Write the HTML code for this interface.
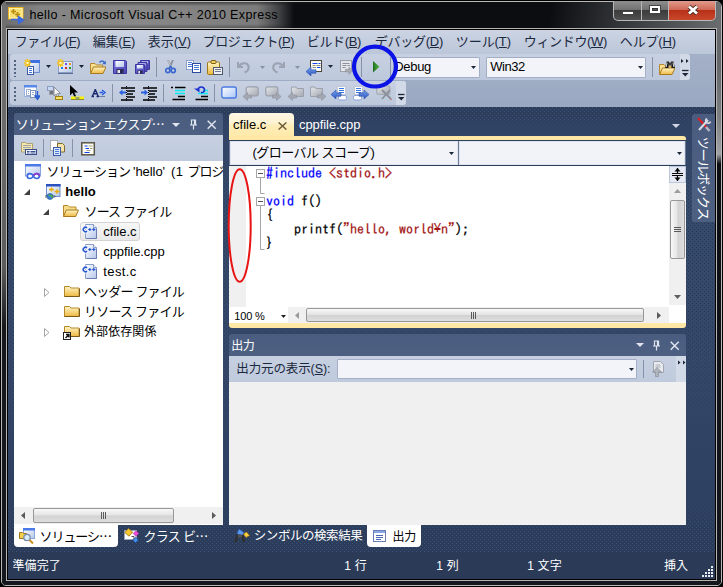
<!DOCTYPE html>
<html lang="ja"><head><meta charset="utf-8"><title>hello - Microsoft Visual C++ 2010 Express</title>
<style>
html,body{margin:0;padding:0}
body{width:723px;height:587px;overflow:hidden;position:relative;background:#000;font-family:"Liberation Sans","Noto Sans CJK JP",sans-serif;font-size:12px}
div,span.t,svg{position:absolute;box-sizing:border-box}
span.t{white-space:nowrap;display:block}
.mono{font-family:"IPAGothic","Liberation Mono","Noto Sans CJK JP",monospace;-webkit-text-stroke:0.25px}
.j{font-family:"Noto Sans CJK JP",sans-serif}
u{text-decoration:underline;text-underline-offset:1px}
</style></head>
<body>

<svg width="0" height="0" style="left:0;top:0"><defs>
<linearGradient id="gY" x1="0" y1="0" x2="0" y2="1"><stop offset="0" stop-color="#fff6c8"/><stop offset="1" stop-color="#eeb840"/></linearGradient>
<linearGradient id="gW" x1="0" y1="0" x2="1" y2="1"><stop offset="0" stop-color="#ffffff"/><stop offset="1" stop-color="#b4c6ea"/></linearGradient>
<linearGradient id="gB" x1="0" y1="0" x2="0" y2="1"><stop offset="0" stop-color="#7aa2ee"/><stop offset="1" stop-color="#2a56c0"/></linearGradient>
<linearGradient id="gG" x1="0" y1="0" x2="1" y2="1"><stop offset="0" stop-color="#e4e6ea"/><stop offset="1" stop-color="#a4a8b0"/></linearGradient>
<linearGradient id="gP" x1="0" y1="0" x2="1" y2="1"><stop offset="0" stop-color="#7a76e0"/><stop offset="1" stop-color="#4a44b0"/></linearGradient>
<linearGradient id="gGr" x1="0" y1="0" x2="1" y2="0"><stop offset="0" stop-color="#1e6e1e"/><stop offset="1" stop-color="#58b848"/></linearGradient>
<linearGradient id="gBk" x1="0" y1="0" x2="1" y2="1"><stop offset="0" stop-color="#ffffff"/><stop offset="1" stop-color="#a8c4f8"/></linearGradient>
</defs></svg>

<div style="left:0px;top:0px;width:723px;height:587px;background:#000;border-radius:7px 7px 6px 6px;"></div>
<div style="left:1px;top:1px;width:721px;height:585px;border:1px solid #b9b9b9;border-radius:6px 6px 5px 5px;background:#14181e;"></div>
<div style="left:2px;top:2px;width:719px;height:26px;background:linear-gradient(90deg,#6c6c6c 0px,#848484 40px,#888888 140px,#7c7c7c 255px,#444547 276px,#0b0d10 292px,#0b0d10 100%);border-radius:5px 5px 0 0;"></div>
<div style="left:2px;top:2px;width:318px;height:4px;background:linear-gradient(180deg,rgba(20,20,22,.55),rgba(20,20,22,0));border-radius:5px 0 0 0;"></div>
<div style="left:2px;top:24px;width:318px;height:4px;background:linear-gradient(0deg,rgba(20,20,22,.35),rgba(20,20,22,0));"></div>
<div style="left:2px;top:2px;width:719px;height:26px;background:linear-gradient(97deg,rgba(108,112,114,0) 545px,rgba(108,112,114,.55) 640px,rgba(108,112,114,1) 722px);border-radius:5px 5px 0 0;"></div>
<div style="left:2px;top:2px;width:4px;height:583px;background:linear-gradient(180deg,#707070 0px,#6a6a6a 150px,#5c5c5c 265px,#16181c 325px,#14181e 100%);border-radius:5px 0 0 5px;"></div>
<div style="left:717px;top:2px;width:4px;height:583px;background:linear-gradient(180deg,#6a6e70 0px,#64686a 60px,#7c7e80 115px,#a0a2a4 152px,#0c0e12 162px,#14181e 100%);border-radius:0 5px 5px 0;"></div>
<div style="left:6px;top:28px;width:711px;height:553px;border:1px solid #b4b4b4;background:#000;"></div>
<div style="left:7px;top:29px;width:709px;height:551px;background:#000;"></div>
<div style="left:8px;top:30px;width:707px;height:549px;background:#293955;"></div>
<svg style="left:8px;top:7px;" width="17" height="17" viewBox="0 0 17 17"><rect x=".5" y=".5" width="14.500" height="11.500" fill="#f8e070" stroke="#e8b020"/><rect x="1.500" y="1.500" width="12.500" height="9.500" fill="none" stroke="#fff4b0"/><path d="M3 4.500h5M5.500 2v5M7 7.500h5M9.500 5v5" stroke="#b88a10" stroke-width="1.700"/><path d="M3 12.500h9M10.500 9.500l5 3.500-5 3.500z" stroke="#3a6ae0" stroke-width="1.400" fill="#3a6ae0"/></svg>
<span id="t1" class="t " style="left:29.4px;top:6.699999999999999px;font-size:12.5px;line-height:16px;color:#000;letter-spacing:0.392px;">hello - Microsoft Visual C++ 2010 Express</span>
<div style="left:613px;top:1px;width:103px;height:20px;background:#b8b8b8;border-radius:0 0 5px 5px;"></div>
<div style="left:614px;top:1px;width:27px;height:19px;background:linear-gradient(#8e8e8e 0,#727272 45%,#3c3c3c 50%,#505050 100%);border-radius:0 0 0 4px;"></div>
<div style="left:642px;top:1px;width:26px;height:19px;background:linear-gradient(#8e8e8e 0,#727272 45%,#3c3c3c 50%,#505050 100%);"></div>
<div style="left:669px;top:1px;width:46px;height:19px;background:linear-gradient(#e09a8c 0,#d06a58 45%,#b83018 50%,#c8482c 100%);border-radius:0 0 4px 0;"></div>
<div style="left:622px;top:11px;width:12px;height:4px;background:#fff;border:1px solid #444;"></div>
<div style="left:649px;top:5px;width:12px;height:9px;background:#fff;border:1px solid #444;"></div>
<div style="left:652px;top:8px;width:6px;height:3px;background:#555;border:1px solid #333;"></div>
<svg style="left:686px;top:4px" width="14" height="12" viewBox="0 0 14 12"><path d="M3 2.500l8 7M11 2.500l-8 7" stroke="#4a2a24" stroke-width="4.400"/><path d="M3 2.500l8 7M11 2.500l-8 7" stroke="#fff" stroke-width="2.800"/></svg>
<div style="left:8px;top:30px;width:707px;height:23px;background:linear-gradient(#ccd4e3,#bcc7d9);"></div>
<span id="t2" class="t " style="left:14.8px;top:33.9px;font-size:13px;line-height:16px;color:#1b293e;letter-spacing:-0.492px;">ファイル(<u>F</u>)</span>
<span id="t3" class="t " style="left:92.8px;top:33.9px;font-size:13px;line-height:16px;color:#1b293e;letter-spacing:-0.232px;">編集(<u>E</u>)</span>
<span id="t4" class="t " style="left:147.8px;top:33.9px;font-size:13px;line-height:16px;color:#1b293e;letter-spacing:-0.032px;">表示(<u>V</u>)</span>
<span id="t5" class="t " style="left:202.8px;top:33.9px;font-size:13px;line-height:16px;color:#1b293e;letter-spacing:-0.462px;">プロジェクト(<u>P</u>)</span>
<span id="t6" class="t " style="left:306.8px;top:33.9px;font-size:13px;line-height:16px;color:#1b293e;letter-spacing:-0.360px;">ビルド(<u>B</u>)</span>
<span id="t7" class="t " style="left:374.8px;top:33.9px;font-size:13px;line-height:16px;color:#1b293e;letter-spacing:-0.268px;">デバッグ(<u>D</u>)</span>
<span id="t8" class="t " style="left:455.8px;top:33.9px;font-size:13px;line-height:16px;color:#1b293e;letter-spacing:-0.073px;">ツール(<u>T</u>)</span>
<span id="t9" class="t " style="left:523.8px;top:33.9px;font-size:13px;line-height:16px;color:#1b293e;letter-spacing:-0.346px;">ウィンドウ(<u>W</u>)</span>
<span id="t10" class="t " style="left:619.8px;top:33.9px;font-size:13px;line-height:16px;color:#1b293e;letter-spacing:-0.146px;">ヘルプ(<u>H</u>)</span>
<div style="left:8px;top:53px;width:707px;height:54px;background:linear-gradient(#a3b0c8,#9aa8c1);"></div>
<div style="left:8px;top:53px;width:707px;height:1px;background:#bcc7d9;"></div>
<div style="left:10px;top:54px;width:680px;height:26px;background:linear-gradient(#c8d1e2,#bdc8dc);border-radius:3px;"></div>
<div style="left:10px;top:81px;width:396px;height:24px;background:linear-gradient(#c8d1e2,#bdc8dc);border-radius:3px;"></div>
<div style="left:680px;top:54px;width:10px;height:26px;background:#d3dae7;border-radius:0 3px 3px 0;"></div>
<div style="left:396px;top:81px;width:10px;height:24px;background:#d3dae7;border-radius:0 3px 3px 0;"></div>
<div style="left:14px;top:60px;width:2px;height:2px;background:#53637f;"></div>
<div style="left:14px;top:64px;width:2px;height:2px;background:#53637f;"></div>
<div style="left:14px;top:68px;width:2px;height:2px;background:#53637f;"></div>
<div style="left:14px;top:72px;width:2px;height:2px;background:#53637f;"></div>
<div style="left:14px;top:76px;width:2px;height:1px;background:#53637f;"></div>
<div style="left:14px;top:87px;width:2px;height:2px;background:#53637f;"></div>
<div style="left:14px;top:91px;width:2px;height:2px;background:#53637f;"></div>
<div style="left:14px;top:95px;width:2px;height:2px;background:#53637f;"></div>
<div style="left:14px;top:99px;width:2px;height:2px;background:#53637f;"></div>
<svg style="left:24px;top:59px;" width="16" height="16" viewBox="0 0 16 16"><rect x="5.5" y="1.5" width="10" height="12" fill="url(#gW)" stroke="#6f8fd0"/><rect x="5" y="1" width="11" height="3" fill="#3f6fe0"/><rect x="3.5" y="7.5" width="6" height="8" fill="#fff" stroke="#3c5aa8"/><path d="M5 9.5H8" stroke="#4070d8"/><path d="M5 11.5H8" stroke="#4070d8"/><path d="M5 13.5H8" stroke="#4070d8"/><path d="M3.500 0v8M0 4h7M1 1l5 6M6 1L1 7" stroke="#f6c41c" stroke-width="1.500"/><rect x="2.500" y="3" width="2" height="2" fill="#fffad0"/></svg>
<svg style="left:45.5px;top:65px" width="5" height="3" viewBox="0 0 5 3"><path d="M0 0h5l-2.5 3z" fill="#1b2538"/></svg>
<svg style="left:57px;top:59px;" width="16" height="16" viewBox="0 0 16 16"><rect x="1.5" y="2.500" width="14" height="11" fill="url(#gW)" stroke="#8a9cc0"/><path d="M1 14.500h15.500V3" fill="none" stroke="#5a6c98"/><rect x="8" y="4" width="2" height="2" fill="#7050d0"/><rect x="12" y="4" width="2" height="2" fill="#f09020"/><rect x="4" y="8" width="2" height="2" fill="#2080e8"/><rect x="8" y="8" width="2" height="2" fill="#e03020"/><rect x="12" y="8" width="2" height="2" fill="#30a030"/><path d="M3.500 0v8M0 4h7M1 1l5 6M6 1L1 7" stroke="#f6c41c" stroke-width="1.500"/><rect x="2.500" y="3" width="2" height="2" fill="#fffad0"/></svg>
<svg style="left:78.5px;top:65px" width="5" height="3" viewBox="0 0 5 3"><path d="M0 0h5l-2.5 3z" fill="#1b2538"/></svg>
<svg style="left:90px;top:59px;" width="16" height="16" viewBox="0 0 16 16"><g transform="translate(0,1)"><path d="M.5 13.5V3.500h4.500l1.500 1.500h6v2" fill="#f8e090" stroke="#b8892c"/><path d="M.5 13.500l3-6.500h12.500l-3 6.500z" fill="url(#gY)" stroke="#a87a20"/></g><path d="M9.500 3.500c1.500-2 4-2 5 .5" fill="none" stroke="#3a6ac8" stroke-width="1.400"/><path d="M15.800 1.500v3.800h-3.600z" fill="#3a6ac8"/></svg>
<svg style="left:113px;top:60px;" width="16" height="16" viewBox="0 0 16 16"><path d="M.5 .5h12l1 1v12h-13z" fill="url(#gP)" stroke="#3c38a0"/><rect x="2.500" y="1" width="8.500" height="6" fill="url(#gW)"/><rect x="3.500" y="9" width="7" height="4.500" fill="#2a2a50"/><rect x="4.500" y="10" width="2.500" height="3" fill="#e8e8f0"/></svg>
<svg style="left:135px;top:60px;" width="16" height="16" viewBox="0 0 16 16"><path d="M5.500 .5h9v9h-9z" fill="url(#gP)" stroke="#3c38a0"/><rect x="7" y="1.500" width="6" height="2" fill="#e8ecff"/><path d="M3 2.500h9v9h-9z" fill="url(#gP)" stroke="#3c38a0"/><rect x="4.500" y="3.500" width="6" height="2" fill="#e8ecff"/><path d="M.5 4.500h9v9h-9z" fill="url(#gP)" stroke="#3c38a0"/><rect x="2" y="5" width="6" height="3.500" fill="url(#gW)"/><rect x="2.500" y="10.500" width="5" height="3" fill="#2a2a50"/><rect x="3.300" y="11" width="1.700" height="2.500" fill="#e8e8f0"/></svg>
<div style="left:156px;top:57px;width:1px;height:20px;background:#8592aa;"></div>
<svg style="left:165px;top:60px;" width="16" height="16" viewBox="0 0 16 16"><path d="M3 0l3.500 8M8 0l-3.500 8" stroke="#8a8e98" stroke-width="1.800" fill="none"/><path d="M3.200 .5l2.600 6" stroke="#e8eaee" stroke-width=".7"/><circle cx="2.800" cy="10.500" r="2.100" fill="none" stroke="#3a68d0" stroke-width="1.700"/><circle cx="8.200" cy="10.500" r="2.100" fill="none" stroke="#3a68d0" stroke-width="1.700"/><path d="M4.200 8.500L5.500 6.500 6.800 8.500" stroke="#3a68d0" stroke-width="1.500" fill="none"/></svg>
<svg style="left:185.5px;top:60px;" width="16" height="16" viewBox="0 0 16 16"><rect x="0.5" y="0.5" width="7" height="9" fill="#fff" stroke="#8aa0d0"/><path d="M2 2.5H6" stroke="#4a78d8"/><path d="M2 4.5H6" stroke="#4a78d8"/><path d="M2 6.5H6" stroke="#4a78d8"/><rect x="6.5" y="3.5" width="8" height="9" fill="#fff" stroke="#2a4aa0"/><path d="M8 5.5H13" stroke="#4a78d8"/><path d="M8 7.5H13" stroke="#4a78d8"/><path d="M8 9.5H13" stroke="#4a78d8"/></svg>
<svg style="left:207px;top:59.5px;" width="16" height="16" viewBox="0 0 16 16"><rect x=".5" y="2" width="12" height="12.500" rx="1" fill="url(#gY)" stroke="#a07818"/><rect x="4" y=".5" width="5" height="3" rx="1" fill="#f0d060" stroke="#806010"/><rect x="6.5" y="7.5" width="9" height="7" fill="#eef0f4" stroke="#50586c"/><path d="M8 9.5H14" stroke="#70788c"/><path d="M8 11.5H14" stroke="#70788c"/></svg>
<div style="left:229px;top:57px;width:1px;height:20px;background:#8592aa;"></div>
<svg style="left:237px;top:60px;" width="16" height="16" viewBox="0 0 16 16"><path d="M1 2v5h5" fill="none" stroke="#9ca3b2" stroke-width="2"/><path d="M2 6.500c2-4 8-4.500 9.500-.5 1 3-1 5.500-4 6.500" fill="none" stroke="#9ca3b2" stroke-width="2.200"/></svg>
<svg style="left:259.5px;top:66px" width="5" height="3" viewBox="0 0 5 3"><path d="M0 0h5l-2.5 3z" fill="#8a919f"/></svg>
<svg style="left:272px;top:60px;" width="16" height="16" viewBox="0 0 16 16"><g transform="translate(13,0) scale(-1,1)"><path d="M1 2v5h5" fill="none" stroke="#9ca3b2" stroke-width="2"/><path d="M2 6.500c2-4 8-4.500 9.500-.5 1 3-1 5.500-4 6.500" fill="none" stroke="#9ca3b2" stroke-width="2.200"/></g></svg>
<svg style="left:294.5px;top:66px" width="5" height="3" viewBox="0 0 5 3"><path d="M0 0h5l-2.5 3z" fill="#8a919f"/></svg>
<svg style="left:306px;top:59.5px;" width="16" height="16" viewBox="0 0 16 16"><rect x="4.500" y=".5" width="11" height="11" fill="#fffef4" stroke="#4a463c"/><path d="M6.500 3.500h5M12.500 3.500h2M11 7.500h3.500" stroke="#1040f0"/><path d="M6.500 5.500h3M10.500 5.500h4M6.500 7.500h3.500" stroke="#8a8a80"/><path d="M0 11.500l5-4.500v2.800h5v3.400h-5v2.800z" fill="url(#gB)" stroke="#2a50b0" stroke-width=".6"/></svg>
<svg style="left:327.5px;top:65px" width="5" height="3" viewBox="0 0 5 3"><path d="M0 0h5l-2.5 3z" fill="#1b2538"/></svg>
<svg style="left:339.5px;top:60px;" width="16" height="16" viewBox="0 0 16 16"><rect x=".5" y=".5" width="11" height="11" fill="#e4e6ea" stroke="#9aa0ac"/><path d="M2.500 3.500h7M2.500 5.500h4M7.500 5.500h2.500M2.500 7.500h3" stroke="#8a909c"/><path d="M13 10.500l-4-3.500v2.300h-3.500v2.600h3.500v2.300z" fill="#a8acb4" stroke="#8a8e98" stroke-width=".6"/></svg>
<div style="left:361px;top:57px;width:1px;height:20px;background:#8592aa;"></div>
<svg style="left:373px;top:60.5px;" width="8" height="12" viewBox="0 0 8 12"><path d="M0 0l6.500 5.800-6.500 5.800z" fill="url(#gGr)"/></svg>
<div style="left:390px;top:57px;width:1px;height:20px;background:#8592aa;"></div>
<div style="left:393px;top:57px;width:87px;height:21px;background:#f2f4f9;border:1px solid #a3afc6;border-radius:1px;"></div>
<div style="left:486px;top:57px;width:160px;height:21px;background:#f2f4f9;border:1px solid #a3afc6;border-radius:1px;"></div>
<span id="t11" class="t " style="left:394.3px;top:58.5px;font-size:13px;line-height:16px;color:#000;letter-spacing:-0.322px;">Debug</span>
<span id="t12" class="t " style="left:490.3px;top:58.5px;font-size:13px;line-height:16px;color:#000;letter-spacing:-0.452px;">Win32</span>
<svg style="left:471px;top:66px" width="5" height="3" viewBox="0 0 5 3"><path d="M0 0h5l-2.5 3z" fill="#1b2538"/></svg>
<svg style="left:637.5px;top:66px" width="5" height="3" viewBox="0 0 5 3"><path d="M0 0h5l-2.5 3z" fill="#1b2538"/></svg>
<div style="left:652px;top:57px;width:1px;height:20px;background:#8592aa;"></div>
<svg style="left:659px;top:59.5px;" width="16" height="16" viewBox="0 0 16 16"><g transform="translate(0,1)"><path d="M.5 13.5V3.500h4.500l1.500 1.500h6v2" fill="#f8e090" stroke="#b8892c"/><path d="M.5 13.500l3-6.500h12.500l-3 6.500z" fill="url(#gY)" stroke="#a87a20"/></g><path d="M7.600 1.500l-1.600 6.500h3.400l.7-6.500zM12 1.500l.7 6.500h3.300l-1.500-6.500z" fill="#1c1c1c"/><path d="M9.800 2.500h2.500v2.800h-2.500z" fill="#3a3a3a"/><path d="M8 2.500l-.9 4.500M14 2.500l.9 4.500" stroke="#f0f0f0" stroke-width=".9"/></svg>
<svg style="left:681px;top:58px" width="8" height="20" viewBox="0 0 8 20"><path d="M0 1l2.500 2-2.500 2zM5 1l2.500 2-2.500 2z" fill="#1b2538"/><path d="M1 12.500h6.500" stroke="#1b2538" stroke-width="1.300"/><path d="M1 15h6.500l-3.250 3.500z" fill="#1b2538"/></svg>
<svg style="left:24px;top:85px;" width="16" height="16" viewBox="0 0 16 16"><rect x=".5" y=".5" width="12" height="11" fill="#fff" stroke="#9ab2e4"/><rect x="0" y="0" width="13" height="2.500" fill="#5a8ae8"/><rect x="2.5" y="4.5" width="4" height="6" fill="#fff" stroke="#9aacd0"/><path d="M4 6.5H5" stroke="#9aacd0"/><path d="M4 8.5H5" stroke="#9aacd0"/><rect x="6.5" y="5.5" width="5" height="7" fill="#fff" stroke="#7a90c4"/><path d="M8 7.5H10" stroke="#9aacd0"/><path d="M8 9.5H10" stroke="#9aacd0"/><path d="M13.500 6v6M11 11l2.500 3.500 2.500-3.500z" stroke="#2a60d0" stroke-width="1.300" fill="#2a60d0"/></svg>
<svg style="left:46.5px;top:85px;" width="16" height="16" viewBox="0 0 16 16"><rect x=".5" y="1.500" width="6" height="4" fill="#c8d8f4" stroke="#8a9cc0"/><rect x="2.500" y="5.500" width="4" height="4" fill="#70747c" stroke="#9aa0ac"/><path d="M7 2v9l2.200-2 1.500 3.200 1.300-.6-1.500-3.100h3z" fill="#f4f4f4" stroke="#7a7e88" stroke-width=".8"/><rect x="8.500" y="11.500" width="7" height="3" fill="#f8e060" stroke="#a08018"/></svg>
<svg style="left:69px;top:85px;" width="16" height="16" viewBox="0 0 16 16"><path d="M1 0v10.500l2.600-2.400 1.800 3.900 1.700-.8-1.800-3.700h3.700z" fill="#000"/><rect x="2" y="11.500" width="13" height="3" fill="#f8f208"/><path d="M2 14.500h13" stroke="#8a8a30"/><path d="M6.500 13h4" stroke="#3050d0"/></svg>
<svg style="left:90.5px;top:89px;" width="16" height="16" viewBox="0 0 16 16"><path d="M.5 7.500h2.500M5.500 7.500h2.500M1.500 7l2.800-6.500 2.800 6.500M2.800 4.800h3" fill="none" stroke="#1a2a70" stroke-width="1.400"/><path d="M8.500 3.500h3.500M11 1l3 2.500-3 2.500" fill="none" stroke="#2a60e0" stroke-width="1.500"/><path d="M8.500 7.500h1M10.500 7.500h1M12.500 7.500h1" stroke="#1a2a70"/></svg>
<div style="left:112px;top:84px;width:1px;height:18px;background:#8592aa;"></div>
<svg style="left:119px;top:85.5px;" width="16" height="16" viewBox="0 0 16 16"><path d="M7.500 0v16" stroke="#000" stroke-dasharray="1 1"/><path d="M2 2h14M8 5h8M8 8h6M8 11h8M2 14h12" stroke="#000" stroke-width="1.600"/><path d="M0 6.500l3.500-3v2h3.500v2h-3.500v2z" fill="#2a60e0"/></svg>
<svg style="left:141px;top:85.5px;" width="16" height="16" viewBox="0 0 16 16"><path d="M7.500 0v16" stroke="#000" stroke-dasharray="1 1"/><path d="M2 2h14M8 5h8M8 8h6M8 11h8M2 14h12" stroke="#000" stroke-width="1.600"/><path d="M7 6.500l-3.500-3v2h-3.500v2h3.500v2z" fill="#2a60e0"/></svg>
<div style="left:163px;top:84px;width:1px;height:18px;background:#8592aa;"></div>
<svg style="left:170.5px;top:85.5px;" width="16" height="16" viewBox="0 0 16 16"><path d="M0 1.500h2M4 1.500h10.500M7 10.500h7M1.500 13.500h12.500" stroke="#000" stroke-width="1.500"/><path d="M4 4.500h10M4 7.500h10" stroke="#10e8f0" stroke-width="1.500"/></svg>
<svg style="left:193.5px;top:85.5px;" width="16" height="16" viewBox="0 0 16 16"><path d="M7 10.500h7M1.500 13.500h12.500" stroke="#000" stroke-width="1.500"/><path d="M4 7.500h10M9 4.500h5" stroke="#10e8f0" stroke-width="1.300"/><path d="M4 3c1.500-3 6.500-2.500 6.500 1 0 2-2 2.800-3.500 2.300" fill="none" stroke="#1a30d0" stroke-width="1.600"/><path d="M0 2.500h5.500v4z" fill="#1a30d0"/></svg>
<div style="left:214px;top:84px;width:1px;height:18px;background:#8592aa;"></div>
<svg style="left:221px;top:86px;" width="16" height="16" viewBox="0 0 16 16"><rect x=".8" y="1" width="14.500" height="11" rx="2" fill="url(#gBk)" stroke="#4a7ae0" stroke-width="1.400"/></svg>
<svg style="left:243px;top:85.5px;" width="16" height="16" viewBox="0 0 16 16"><rect x="3.2" y=".8" width="12" height="9" rx="2" fill="url(#gG)" stroke="#9aa0ac" stroke-width="1.200"/><path d="M0 10.500l4.500-4v2.500h4v3h-4v2.500z" fill="#a4a8b2" stroke="#8c909a" stroke-width=".6"/></svg>
<svg style="left:265px;top:85.5px;" width="16" height="16" viewBox="0 0 16 16"><rect x="0.8" y=".8" width="12" height="9" rx="2" fill="url(#gG)" stroke="#9aa0ac" stroke-width="1.200"/><path d="M16 10.500l-4.500-4v2.500h-4v3h4v2.500z" fill="#a4a8b2" stroke="#8c909a" stroke-width=".6"/></svg>
<svg style="left:288px;top:85.5px;" width="16" height="16" viewBox="0 0 16 16"><path d="M3.5 3.500v-2.500h4.500l1 1.500h6.500v8h-12z" fill="url(#gG)" stroke="#9aa0ac"/><path d="M0 10.500l4.500-4v2.500h4v3h-4v2.500z" fill="#a4a8b2" stroke="#8c909a" stroke-width=".6"/></svg>
<svg style="left:310px;top:85.5px;" width="16" height="16" viewBox="0 0 16 16"><path d="M0.5 3.500v-2.500h4.500l1 1.500h6.500v8h-12z" fill="url(#gG)" stroke="#9aa0ac"/><path d="M16 10.500l-4.500-4v2.500h-4v3h4v2.500z" fill="#a4a8b2" stroke="#8c909a" stroke-width=".6"/></svg>
<svg style="left:331px;top:86px;" width="16" height="16" viewBox="0 0 16 16"><rect x="6.5" y="0.5" width="8" height="8" fill="#fff" stroke="#c0c8d8"/><path d="M8 2.5H13" stroke="#3a78e0"/><path d="M8 4.5H13" stroke="#3a78e0"/><path d="M8 6.5H13" stroke="#3a78e0"/><rect x="7.500" y="9.500" width="8" height="4.500" rx="1.500" fill="#fff" stroke="#8aa4d8"/><path d="M0 8.500l5-4.500v2.800h5v3.400h-5v2.800z" fill="url(#gB)" stroke="#2a50b0" stroke-width=".6"/></svg>
<svg style="left:353px;top:86px;" width="16" height="16" viewBox="0 0 16 16"><rect x="1.5" y="0.5" width="8" height="8" fill="#fff" stroke="#c0c8d8"/><path d="M3 2.5H8" stroke="#3a78e0"/><path d="M3 4.5H8" stroke="#3a78e0"/><path d="M3 6.5H8" stroke="#3a78e0"/><rect x=".5" y="9.500" width="8" height="4.500" rx="1.500" fill="#fff" stroke="#8aa4d8"/><path d="M16 8.500l-5-4.500v2.800h-5v3.400h5v2.800z" fill="url(#gB)" stroke="#2a50b0" stroke-width=".6"/></svg>
<svg style="left:375.5px;top:85px;" width="16" height="16" viewBox="0 0 16 16"><rect x=".8" y="1" width="13" height="8.500" rx="2" fill="url(#gG)" stroke="#a4a8b2" stroke-width="1.200"/><path d="M6 5l9 9M14 5l-8 9" stroke="#8c909a" stroke-width="1.800"/><rect x="14.500" y="14" width="1" height="1" fill="#e04020"/></svg>
<svg style="left:397px;top:92px" width="8" height="10" viewBox="0 0 8 10"><path d="M1 2.500h6.500" stroke="#1b2538" stroke-width="1.300"/><path d="M1 5h6.500l-3.250 3.500z" fill="#1b2538"/></svg>
<svg style="left:8px;top:107px" width="707" height="445" viewBox="0 0 707 445"><defs><linearGradient id="bgg" x1="0" y1="0" x2="0" y2="1"><stop offset="0" stop-color="#2c3c5a"/><stop offset="0.07" stop-color="#324568"/><stop offset="0.2" stop-color="#364a6b"/><stop offset="0.6" stop-color="#34476a"/><stop offset="0.84" stop-color="#2f4162"/><stop offset="1" stop-color="#2b3c5a"/></linearGradient><linearGradient id="dgg" x1="0" y1="0" x2="0" y2="1"><stop offset="0" stop-color="#3d5378"/><stop offset="0.07" stop-color="#324568"/><stop offset="0.2" stop-color="#293853"/><stop offset="0.6" stop-color="#2b3b58"/><stop offset="0.84" stop-color="#2f4162"/><stop offset="1" stop-color="#3d5378"/></linearGradient><pattern id="dots" width="4" height="4" patternUnits="userSpaceOnUse"><rect x="0" y="0" width="1" height="1" fill="#fff"/><rect x="2" y="2" width="1" height="1" fill="#fff"/></pattern><mask id="dm"><rect width="707" height="445" fill="url(#dots)"/></mask></defs><rect width="707" height="445" fill="url(#bgg)"/><rect width="707" height="445" fill="url(#dgg)" mask="url(#dm)"/></svg>
<div style="left:8px;top:552px;width:707px;height:27px;background:#2a3a57;"></div>
<div style="left:14px;top:113px;width:209px;height:22px;background:linear-gradient(#4a5d80,#4d6082);border-radius:3px 3px 0 0;"></div>
<span id="t13" class="t " style="left:15.8px;top:116.0px;font-size:13px;line-height:16px;color:#fff;letter-spacing:-0.830px;">ソリューション エクスプ<span class="j">…</span></span>
<svg style="left:172px;top:122.5px" width="8" height="4" viewBox="0 0 8 4"><path d="M0 0h8l-4.0 4z" fill="#dfe4ee"/></svg>
<svg style="left:190px;top:118.5px" width="7" height="11" viewBox="0 0 7 11"><path d="M1.500 5.500v-4.500h4v4.500M4.500 1v4.500M0 6h7M3.500 6v4.500" fill="none" stroke="#dfe4ee" stroke-width="1.200"/></svg>
<svg style="left:207.3px;top:119.5px" width="10" height="10" viewBox="0 0 10 10"><path d="M.7 .7l8 8M8.700 .7l-8 8" stroke="#dfe4ee" stroke-width="1.500"/></svg>
<div style="left:14px;top:135px;width:209px;height:26px;background:linear-gradient(#c6d0e1,#bfcadc);"></div>
<svg style="left:21px;top:140px;" width="16" height="16" viewBox="0 0 16 16"><path d="M.5 2.500h4l1 1h6v8.500h-11z" fill="#f4e8b0" stroke="#b0a070"/><path d="M2 5.500h8M2 7.500h8M2 9.500h4" stroke="#a0a4a8"/><rect x="4.500" y="9.500" width="11" height="5" fill="#f0f4fc" stroke="#3a4e88"/><path d="M6 11.500h2.500M9.500 11.500h5M6 13h2.500M9.500 13h5" stroke="#3a4e88"/></svg>
<div style="left:43px;top:139px;width:1px;height:18px;background:#8592aa;"></div>
<svg style="left:50px;top:140px;" width="16" height="16" viewBox="0 0 16 16"><rect x=".5" y=".5" width="7" height="10" fill="#fff" stroke="#70747c" stroke-dasharray="1 1"/><path d="M7.500 3.500h5l2 2v6.500h-7z" fill="#f4e4a8" stroke="#806c30"/><rect x="3.5" y="7.5" width="7" height="8" fill="#dce8fc" stroke="#3c5aa8"/><path d="M5 9.5H9" stroke="#4a78d8"/><path d="M5 11.5H9" stroke="#4a78d8"/><path d="M5 13.5H9" stroke="#4a78d8"/></svg>
<div style="left:72px;top:139px;width:1px;height:18px;background:#8592aa;"></div>
<svg style="left:80.5px;top:141.5px;" width="16" height="16" viewBox="0 0 16 16"><rect x=".8" y=".8" width="12.500" height="12" fill="#fffef4" stroke="#5a5648" stroke-width="1.500"/><path d="M3.500 4h3M4.500 6.500h3.500M3.500 10.500h5" stroke="#1040f0" stroke-width="1.200"/><path d="M7.500 4h4M9 6.500h2.500M5.500 8.500h4" stroke="#a0a098"/></svg>
<div style="left:14px;top:161px;width:209px;height:364px;background:#fff;"></div>
<div style="left:80px;top:222px;width:60px;height:19px;background:linear-gradient(#f7f7f7,#e9e9e9);border:1px solid #d3d3d3;border-radius:3px;"></div>
<svg style="left:25px;top:164px;" width="16" height="16" viewBox="0 0 16 16"><rect x=".5" y=".5" width="15" height="11.500" fill="url(#gW)" stroke="#8aa4dc"/><rect x="0" y="0" width="16" height="2.500" fill="#4a7ae8"/><path d="M8.300 12c-1.500-3.300-6-3.300-6 0s4.500 3.300 6 0 6-3.300 6 0-4.500 3.300-6 0z" fill="#fff" stroke="#3a6ae0" stroke-width="1.700"/><path d="M8.300 12c1.500-3.300 6-3.300 6 0" fill="none" stroke="#8a40d0" stroke-width="1.700"/></svg>
<span id="t14" class="t " style="left:46.5px;top:163.7px;font-size:13px;line-height:16px;color:#000;letter-spacing:-1.036px;">ソリューション</span>
<span id="t15" class="t " style="left:133px;top:163.7px;font-size:13px;line-height:16px;color:#000;letter-spacing:-0.062px;">&#x27;hello&#x27;</span>
<span id="t16" class="t " style="left:171px;top:163.7px;font-size:13px;line-height:16px;color:#000;letter-spacing:0.469px;">(1</span>
<span id="t17" class="t " style="left:187.4px;top:163.7px;font-size:13px;line-height:16px;color:#000;letter-spacing:-0.992px;clip-path:inset(0 39.800px 0 0);">プロジェクト)</span>
<svg style="left:24px;top:189px" width="6" height="6" viewBox="0 0 6 6"><path d="M6 0v6h-6z" fill="#404040"/></svg>
<svg style="left:45px;top:183.5px;" width="16" height="16" viewBox="0 0 16 16"><rect x="1.500" y=".5" width="13.500" height="12" fill="url(#gW)" stroke="#6f8fd0"/><rect x="1" y="0" width="14.500" height="2.500" fill="#2a50c0"/><path d="M4 5.500h5M6.500 3.500v4M9.500 7.500h5M12 5.500v4" stroke="#e8b010" stroke-width="1.700"/><circle cx="5" cy="12.500" r="3" fill="#3a80d8" stroke="#1a4a90" stroke-width=".6"/><path d="M3.500 11c1 0 1.500 1 2.500.5s1.500 1 .5 2.500" stroke="#50b040" stroke-width="1.400" fill="none"/><path d="M1.500 11l-1.500 1.500 1.500 1.500M8.500 11l1.500 1.500-1.500 1.500" stroke="#303030" stroke-width=".8" fill="none"/></svg>
<span id="t18" class="t " style="left:65.3px;top:183.7px;font-size:13px;line-height:16px;color:#000;letter-spacing:0.031px;font-weight:bold;">hello</span>
<svg style="left:43px;top:209px" width="6" height="6" viewBox="0 0 6 6"><path d="M6 0v6h-6z" fill="#404040"/></svg>
<svg style="left:63px;top:205px;" width="16" height="16" viewBox="0 0 16 16"><path d="M.5 11.500V.5h4.500l1.500 1.500h6.500v3" fill="#f6dc88" stroke="#b8892c"/><path d="M.5 11.500l2.800-6.500h12.200l-2.800 6.500z" fill="url(#gY)" stroke="#a87a20"/></svg>
<span id="t19" class="t " style="left:84.5px;top:203.7px;font-size:13px;line-height:16px;color:#000;letter-spacing:-0.871px;">ソース ファイル</span>
<svg style="left:82px;top:224px;" width="16" height="16" viewBox="0 0 16 16"><path d="M3.500 .5h8l3 3v11h-11z" fill="url(#gW)" stroke="#8a9cc8"/><path d="M11.500 .5v3h3" fill="#fff" stroke="#8a9cc8"/><path d="M14.500 5v9.500h-10" fill="none" stroke="#6a7cb0"/><path d="M5 3.900a2.200 2.200 0 1 0 0 3.200" fill="none" stroke="#f4f7fd" stroke-width="3.400"/><path d="M5 3.900a2.200 2.200 0 1 0 0 3.200" fill="none" stroke="#2a58d0" stroke-width="1.600"/><path d="M6.200 5.500h3.200M7.800 3.900v3.200M10.200 5.500h3.200M11.800 3.900v3.200" stroke="#2a58d0" stroke-width="1.200"/></svg>
<span id="t20" class="t " style="left:103.3px;top:223.7px;font-size:13px;line-height:16px;color:#000;letter-spacing:0.009px;">cfile.c</span>
<svg style="left:82px;top:244px;" width="16" height="16" viewBox="0 0 16 16"><path d="M3.500 .5h8l3 3v11h-11z" fill="url(#gW)" stroke="#8a9cc8"/><path d="M11.500 .5v3h3" fill="#fff" stroke="#8a9cc8"/><path d="M14.500 5v9.500h-10" fill="none" stroke="#6a7cb0"/><path d="M5 3.900a2.200 2.200 0 1 0 0 3.200" fill="none" stroke="#f4f7fd" stroke-width="3.400"/><path d="M5 3.900a2.200 2.200 0 1 0 0 3.200" fill="none" stroke="#2a58d0" stroke-width="1.600"/><path d="M6.200 5.500h3.200M7.800 3.900v3.200M10.200 5.500h3.200M11.800 3.900v3.200" stroke="#2a58d0" stroke-width="1.200"/></svg>
<span id="t21" class="t " style="left:103.3px;top:243.7px;font-size:13px;line-height:16px;color:#000;letter-spacing:-0.078px;">cppfile.cpp</span>
<svg style="left:82px;top:264px;" width="16" height="16" viewBox="0 0 16 16"><path d="M3.500 .5h8l3 3v11h-11z" fill="url(#gW)" stroke="#8a9cc8"/><path d="M11.500 .5v3h3" fill="#fff" stroke="#8a9cc8"/><path d="M14.500 5v9.500h-10" fill="none" stroke="#6a7cb0"/><path d="M5 3.900a2.200 2.200 0 1 0 0 3.200" fill="none" stroke="#f4f7fd" stroke-width="3.400"/><path d="M5 3.900a2.200 2.200 0 1 0 0 3.200" fill="none" stroke="#2a58d0" stroke-width="1.600"/><path d="M6.200 5.500h3.200M7.800 3.900v3.200M10.200 5.500h3.200M11.800 3.900v3.200" stroke="#2a58d0" stroke-width="1.200"/></svg>
<span id="t22" class="t " style="left:103.3px;top:263.7px;font-size:13px;line-height:16px;color:#000;letter-spacing:0.370px;">test.c</span>
<svg style="left:44px;top:288px" width="6" height="9" viewBox="0 0 6 9"><path d="M.5 .5v8l4.500-4z" fill="#fff" stroke="#a6a6a6"/></svg>
<svg style="left:63.5px;top:283.5px;" width="16" height="16" viewBox="0 0 16 16"><g transform="translate(0,-1)"><path d="M.5 3.5h5l1.5 1.5h8v8.500h-14.500z" fill="url(#gY)" stroke="#b8892c"/><path d="M.5 13.5H15.500V5.500" fill="none" stroke="#7a5a18"/></g></svg>
<span id="t23" class="t " style="left:84px;top:283.7px;font-size:13px;line-height:16px;color:#000;letter-spacing:-0.847px;">ヘッダー ファイル</span>
<svg style="left:63.5px;top:303.5px;" width="16" height="16" viewBox="0 0 16 16"><g transform="translate(0,-1)"><path d="M.5 3.5h5l1.5 1.5h8v8.500h-14.500z" fill="url(#gY)" stroke="#b8892c"/><path d="M.5 13.5H15.500V5.500" fill="none" stroke="#7a5a18"/></g></svg>
<span id="t24" class="t " style="left:84px;top:303.7px;font-size:13px;line-height:16px;color:#000;letter-spacing:-0.774px;">リソース ファイル</span>
<svg style="left:44px;top:328px" width="6" height="9" viewBox="0 0 6 9"><path d="M.5 .5v8l4.500-4z" fill="#fff" stroke="#a6a6a6"/></svg>
<svg style="left:63.5px;top:323.5px;" width="16" height="16" viewBox="0 0 16 16"><g transform="translate(0,-1)"><path d="M.5 3.5h5l1.5 1.5h8v8.500h-14.500z" fill="url(#gY)" stroke="#b8892c"/><path d="M.5 13.5H15.500V5.500" fill="none" stroke="#7a5a18"/></g></svg>
<svg style="left:63px;top:332px;" width="8" height="8" viewBox="0 0 8 8"><rect x=".5" y=".5" width="7" height="7" fill="#fff" stroke="#202020"/><path d="M2.500 6l3-3M3 2.500h3v3" fill="none" stroke="#101010" stroke-width="1.300"/></svg>
<span id="t25" class="t " style="left:84px;top:324.0px;font-size:12px;line-height:16px;color:#000;letter-spacing:0.081px;">外部依存関係</span>
<div style="left:14px;top:507px;width:209px;height:17px;background:#f0f0f0;"></div>
<div style="left:33px;top:508px;width:141px;height:15px;background:linear-gradient(#f8f8f8,#e4e4e4 48%,#d2d2d2 52%,#dedede);border:1px solid #989898;border-radius:2px;"></div>
<svg style="left:100px;top:512px" width="8" height="7" viewBox="0 0 8 7"><path d="M1.500 0v7M3.500 0v7M5.500 0v7" stroke="#5a5a5a"/></svg>
<svg style="left:21px;top:512px" width="4" height="7" viewBox="0 0 4 7"><path d="M4 0v7l-4-3.500z" fill="#5a5a5a"/></svg>
<svg style="left:212px;top:512px" width="4" height="7" viewBox="0 0 4 7"><path d="M0 0v7l4-3.500z" fill="#5a5a5a"/></svg>
<div style="left:14px;top:525px;width:104px;height:22px;background:#fff;border-radius:0 0 4px 4px;"></div>
<svg style="left:19px;top:527.5px;" width="16" height="16" viewBox="0 0 16 16"><rect x="4.500" y=".5" width="11" height="10" fill="url(#gW)" stroke="#8aa4dc"/><rect x="4" y="0" width="12" height="2.500" fill="#4a7ae8"/><path d="M.5 4.500h3l1 1h3v5h-7z" fill="#f4d050" stroke="#a07818"/><circle cx="8" cy="9.500" r="3.200" fill="#d8ecfc" stroke="#7a8ca8" stroke-width="1.300"/><path d="M10.500 12l3.500 3.500" stroke="#c89020" stroke-width="2"/></svg>
<span id="t26" class="t " style="left:39.5px;top:528.3px;font-size:13px;line-height:16px;color:#000;letter-spacing:-1.044px;">ソリューシ<span class="j">…</span></span>
<svg style="left:123.5px;top:528px;" width="16" height="16" viewBox="0 0 16 16"><rect x=".5" y="2.500" width="12" height="9" fill="#fff" stroke="#9aa4b8"/><rect x="2" y="1.500" width="5.500" height="5.500" transform="rotate(40 4.700 4.200)" fill="#f8c830" stroke="#a07818" stroke-width=".8"/><rect x="10" y="3.500" width="4" height="4" transform="rotate(45 12 5.500)" fill="#e850d8" stroke="#a030a0" stroke-width=".6"/><rect x="9.500" y="10" width="4" height="4" transform="rotate(45 11.500 12)" fill="#4090f0" stroke="#2050b0" stroke-width=".6"/><path d="M7.500 8.500h2.500v3" fill="none" stroke="#505050"/></svg>
<span id="t27" class="t " style="left:143.5px;top:528.3px;font-size:13px;line-height:16px;color:#fff;letter-spacing:-0.729px;">クラス ビ<span class="j">…</span></span>
<div style="left:229px;top:113px;width:65px;height:24px;background:linear-gradient(#fdf7e4 0,#fdf3d2 42%,#ffedb8 52%,#ffe9a8 100%);border-radius:4px 4px 0 0;"></div>
<span id="t28" class="t " style="left:233px;top:116.8px;font-size:13px;line-height:16px;color:#000;letter-spacing:0.009px;">cfile.c</span>
<svg style="left:277.5px;top:122px" width="9" height="8" viewBox="0 0 9 8"><path d="M.6 .4l7.800 7.200M8.400 .4l-7.800 7.200" stroke="#6e5f3c" stroke-width="1.400"/></svg>
<span id="t29" class="t " style="left:299px;top:116.8px;font-size:13px;line-height:16px;color:#fff;letter-spacing:-0.078px;">cppfile.cpp</span>
<svg style="left:672px;top:123.5px" width="8" height="4" viewBox="0 0 8 4"><path d="M0 0h8l-4.0 4z" fill="#cfd6e4"/></svg>
<div style="left:229px;top:136px;width:457px;height:5px;background:#ffe8a6;border-radius:0 3px 0 0;"></div>
<div style="left:229px;top:140px;width:457px;height:26px;background:#2d3d5c;"></div>
<div style="left:229px;top:141px;width:457px;height:24px;background:#6c7b99;"></div>
<div style="left:230px;top:141px;width:228px;height:24px;background:#f1f3f9;border:1px solid #dfe4ee;"></div>
<div style="left:459px;top:141px;width:226px;height:24px;background:#f1f3f9;border:1px solid #dfe4ee;"></div>
<span id="t30" class="t " style="left:252.4px;top:145.0px;font-size:13px;line-height:16px;color:#000;letter-spacing:-0.531px;">(グローバル スコープ)</span>
<svg style="left:448.5px;top:152px" width="5" height="3" viewBox="0 0 5 3"><path d="M0 0h5l-2.5 3z" fill="#1b2538"/></svg>
<svg style="left:676.5px;top:152px" width="5" height="3" viewBox="0 0 5 3"><path d="M0 0h5l-2.5 3z" fill="#1b2538"/></svg>
<div style="left:229px;top:166px;width:441px;height:141px;background:#fff;"></div>
<div style="left:229px;top:166px;width:17px;height:141px;background:#f0f0f0;"></div>
<div style="left:669px;top:166px;width:17px;height:139px;background:#f0f0f0;"></div>
<div style="left:669px;top:166px;width:17px;height:17px;background:#e4e9f3;border:1px solid #bcc7da;"></div>
<svg style="left:672px;top:168px" width="11" height="13" viewBox="0 0 11 13"><path d="M5.500 0v5M5.500 13v-5M0 5.500h11M0 7.500h11" stroke="#000" stroke-width="1.200"/><path d="M2.500 3.500l3-3.500 3 3.500zM2.500 9.500l3 3.500 3-3.500z" fill="#000"/></svg>
<svg style="left:674px;top:189px" width="7" height="4" viewBox="0 0 7 4"><path d="M0 4l3.500-4 3.500 4z" fill="#9c9c9c"/></svg>
<div style="left:670px;top:200px;width:15px;height:59px;background:linear-gradient(90deg,#f8f8f8,#e4e4e4 48%,#d2d2d2 52%,#dedede);border:1px solid #989898;border-radius:2px;"></div>
<svg style="left:674px;top:226px" width="7" height="8" viewBox="0 0 7 8"><path d="M0 1.500h7M0 3.500h7M0 5.500h7" stroke="#5a5a5a"/></svg>
<svg style="left:674px;top:295px" width="7" height="4" viewBox="0 0 7 4"><path d="M0 0l3.500 4 3.500-4z" fill="#606060"/></svg>
<div style="left:669px;top:305px;width:17px;height:18px;background:#fff;"></div>
<div style="left:229px;top:307px;width:440px;height:16px;background:#f0f0f0;"></div>
<div style="left:229px;top:307px;width:59px;height:16px;background:#fff;"></div>
<span id="t31" class="t " style="left:234.2px;top:308.2px;font-size:11px;line-height:16px;color:#000;letter-spacing:-0.121px;">100 %</span>
<svg style="left:280.5px;top:315px" width="5" height="3" viewBox="0 0 5 3"><path d="M0 0h5l-2.5 3z" fill="#202020"/></svg>
<svg style="left:295px;top:312px" width="4" height="7" viewBox="0 0 4 7"><path d="M4 0v7l-4-3.500z" fill="#9a9a9a"/></svg>
<div style="left:306px;top:308px;width:338px;height:14px;background:linear-gradient(#f8f8f8,#e4e4e4 48%,#d2d2d2 52%,#dedede);border:1px solid #989898;border-radius:2px;"></div>
<svg style="left:470px;top:311.5px" width="8" height="7" viewBox="0 0 8 7"><path d="M1.500 0v7M3.500 0v7M5.500 0v7" stroke="#5a5a5a"/></svg>
<svg style="left:657px;top:312px" width="4" height="7" viewBox="0 0 4 7"><path d="M0 0v7l4-3.500z" fill="#5a5a5a"/></svg>
<div style="left:229px;top:323px;width:457px;height:5px;background:#ffe8a6;border-radius:0 0 3px 3px;"></div>
<svg style="left:256px;top:169px" width="10" height="84" viewBox="0 0 10 84"><path d="M4.500 9v15.500h4M4.500 37v43.500h4" fill="none" stroke="#a5a5a5"/><rect x=".5" y=".5" width="8" height="8" fill="#fff" stroke="#a5a5a5"/><path d="M2 4.500h5" stroke="#555"/><rect x=".5" y="28.500" width="8" height="8" fill="#fff" stroke="#a5a5a5"/><path d="M2 32.500h5" stroke="#555"/></svg>
<span id="t32" class="t mono" style="left:266px;top:166.0px;font-size:14px;line-height:14px;color:#0000ff;letter-spacing:0.000px;">#include</span>
<span id="t33" class="t mono" style="left:329px;top:166.0px;font-size:14px;line-height:14px;color:#a31515;letter-spacing:0.000px;">&lt;stdio.h&gt;</span>
<span id="t34" class="t mono" style="left:266px;top:194.0px;font-size:14px;line-height:14px;color:#0000ff;letter-spacing:0.000px;">void</span>
<span id="t35" class="t mono" style="left:301px;top:194.0px;font-size:14px;line-height:14px;color:#000;letter-spacing:0.000px;">f()</span>
<span id="t36" class="t mono" style="left:266px;top:208.0px;font-size:14px;line-height:14px;color:#000;letter-spacing:0.000px;">{</span>
<span id="t37" class="t mono" style="left:294px;top:222.0px;font-size:14px;line-height:14px;color:#000;letter-spacing:0.000px;">printf(</span>
<span id="t38" class="t mono" style="left:343px;top:222.0px;font-size:14px;line-height:14px;color:#a31515;letter-spacing:0.000px;">&quot;hello, world</span>
<span id="t39" class="t " style="left:433.4px;top:221.5px;font-size:13px;line-height:14px;color:#a31515;letter-spacing:0.000px;font-family:Liberation Mono,monospace;">¥</span>
<span id="t40" class="t mono" style="left:441px;top:222.0px;font-size:14px;line-height:14px;color:#a31515;letter-spacing:0.000px;">n&quot;</span>
<span id="t41" class="t mono" style="left:455px;top:222.0px;font-size:14px;line-height:14px;color:#000;letter-spacing:0.000px;">);</span>
<span id="t42" class="t mono" style="left:266px;top:236.0px;font-size:14px;line-height:14px;color:#000;letter-spacing:0.000px;">}</span>
<div style="left:229px;top:334px;width:457px;height:22px;background:linear-gradient(#4a5d80,#4d6082);border-radius:3px 3px 0 0;"></div>
<span id="t43" class="t " style="left:231.3px;top:337.5px;font-size:12px;line-height:16px;color:#fff;letter-spacing:-0.508px;">出力</span>
<svg style="left:635.5px;top:343px" width="8" height="4" viewBox="0 0 8 4"><path d="M0 0h8l-4.0 4z" fill="#dfe4ee"/></svg>
<svg style="left:653px;top:339.5px" width="7" height="11" viewBox="0 0 7 11"><path d="M1.500 5.500v-4.500h4v4.500M4.500 1v4.500M0 6h7M3.500 6v4.500" fill="none" stroke="#dfe4ee" stroke-width="1.200"/></svg>
<svg style="left:670.3px;top:340.5px" width="10" height="10" viewBox="0 0 10 10"><path d="M.7 .7l8 8M8.700 .7l-8 8" stroke="#dfe4ee" stroke-width="1.500"/></svg>
<div style="left:229px;top:356px;width:457px;height:26px;background:linear-gradient(#c6d0e1,#bfcadc);"></div>
<div style="left:676px;top:356px;width:10px;height:26px;background:#d3dae7;"></div>
<svg style="left:678px;top:360px" width="8" height="6" viewBox="0 0 8 6"><path d="M0 .5l2.500 2-2.500 2zM5 .5l2.500 2-2.500 2z" fill="#1b2538"/></svg>
<span id="t44" class="t " style="left:236.3px;top:361.0px;font-size:12.5px;line-height:16px;color:#1b293e;letter-spacing:-0.116px;">出力元の表示(<u>S</u>):</span>
<div style="left:337px;top:359px;width:300px;height:20px;background:#f2f4f9;border:1px solid #a3afc6;border-radius:1px;"></div>
<svg style="left:628.5px;top:368px" width="5" height="3" viewBox="0 0 5 3"><path d="M0 0h5l-2.5 3z" fill="#1b2538"/></svg>
<div style="left:643px;top:360px;width:1px;height:18px;background:#8592aa;"></div>
<svg style="left:651px;top:361px;" width="16" height="16" viewBox="0 0 16 16"><path d="M2.500 .5h7l3 3v8h-10z" fill="#e8eaee" stroke="#a0a4ae"/><path d="M4.500 4h5M4.500 6h5" stroke="#a8acb6"/><path d="M7.500 15.500h-3v-4.500h-3l4.500-4.500 4.500 4.500h-3z" fill="#b0b4bc" stroke="#8c909a" stroke-width=".7"/></svg>
<div style="left:229px;top:382px;width:457px;height:143px;background:#f0f0f0;"></div>
<div style="left:367px;top:525px;width:54px;height:22px;background:#fff;border-radius:0 0 4px 4px;"></div>
<svg style="left:234px;top:528px;" width="16" height="16" viewBox="0 0 16 16"><path d="M5 1l5 3.500-2 3.500-5-2.500z" fill="#5a9af0" stroke="#2a58b0" stroke-width=".7"/><path d="M9.500 6l3-2 3 3.500-3.500 2z" fill="#f8d040" stroke="#a07818" stroke-width=".7"/><path d="M3.500 7l-2 7M8 7l2 7" stroke="#303030" stroke-width="2.600"/><path d="M4 6.500h4v3h-4z" fill="#505050"/></svg>
<span id="t45" class="t " style="left:253.8px;top:528.4px;font-size:12.5px;line-height:16px;color:#fff;letter-spacing:-0.446px;">シンボルの検索結果</span>
<svg style="left:373px;top:530px;" width="13" height="12" viewBox="0 0 13 12"><rect x=".5" y=".5" width="12" height="11" fill="#fff" stroke="#6a80b4"/><rect x="1" y="1" width="11" height="2" fill="#8aa6e4"/><path d="M3 5.500h7M3 7.500h7M3 9.500h5" stroke="#4a68b8"/></svg>
<span id="t46" class="t " style="left:392.5px;top:528.6px;font-size:12px;line-height:16px;color:#000;letter-spacing:-0.258px;">出力</span>
<div style="left:692px;top:114px;width:23px;height:108px;background:linear-gradient(#4a5d80,#4d6082);border-radius:3px 0 0 3px;"></div>
<svg style="left:696px;top:116.5px;" width="16" height="16" viewBox="0 0 16 16"><path d="M2 1l10 11" stroke="#e02020" stroke-width="2"/><path d="M3 13l9-10" stroke="#d8dce4" stroke-width="2"/><path d="M11 1.500a2.500 2.500 0 1 0 3.500 3" fill="none" stroke="#d8dce4" stroke-width="1.600"/><path d="M10 10l3.500 4" stroke="#b0b8c8" stroke-width="2.500"/></svg>
<span id="t47" class="t " style="left:661.95px;top:169.85px;font-size:13px;line-height:16px;color:#fff;letter-spacing:-1.161px;transform:rotate(90deg);transform-origin:50% 50%;">ツールボックス</span>
<span id="t48" class="t " style="left:12.5px;top:558.3px;font-size:12px;line-height:16px;color:#fff;letter-spacing:0.121px;">準備完了</span>
<span id="t49" class="t " style="left:344.3px;top:558.3px;font-size:12px;line-height:16px;color:#fff;letter-spacing:0.161px;">1 行</span>
<span id="t50" class="t " style="left:436.3px;top:558.3px;font-size:12px;line-height:16px;color:#fff;letter-spacing:0.161px;">1 列</span>
<span id="t51" class="t " style="left:527.3px;top:558.3px;font-size:12px;line-height:16px;color:#fff;letter-spacing:0.121px;">1 文字</span>
<span id="t52" class="t " style="left:664px;top:558.3px;font-size:12px;line-height:16px;color:#fff;letter-spacing:-0.008px;">挿入</span>
<svg style="left:702px;top:566px" width="12" height="12" viewBox="0 0 12 12"><path d="M9 0h2v2h-2zM6 3h2v2h-2zM9 3h2v2h-2zM3 6h2v2h-2zM6 6h2v2h-2zM9 6h2v2h-2zM0 9h2v2h-2zM3 9h2v2h-2zM6 9h2v2h-2zM9 9h2v2h-2z" fill="#e8ecf4"/></svg>
<svg style="left:0;top:0" width="723" height="587" viewBox="0 0 723 587"><ellipse cx="375" cy="66.600" rx="21" ry="19.900" fill="none" stroke="#0b12e6" stroke-width="4.200"/><ellipse cx="239.7" cy="225.5" rx="11" ry="56.300" fill="none" stroke="#e81414" stroke-width="2"/></svg>
</body></html>
